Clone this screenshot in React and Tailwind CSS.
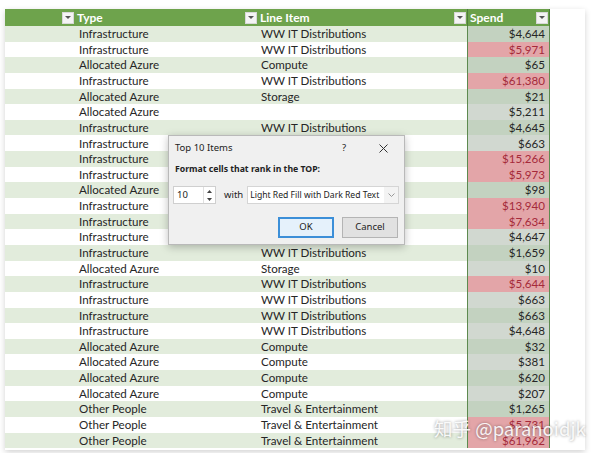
import React from "react";

const rows = [
  ["Infrastructure", "WW IT Distributions", "$4,644", false],
  ["Infrastructure", "WW IT Distributions", "$5,971", true],
  ["Allocated Azure", "Compute", "$65", false],
  ["Infrastructure", "WW IT Distributions", "$61,380", true],
  ["Allocated Azure", "Storage", "$21", false],
  ["Allocated Azure", "", "$5,211", false],
  ["Infrastructure", "WW IT Distributions", "$4,645", false],
  ["Infrastructure", "WW IT Distributions", "$663", false],
  ["Infrastructure", "WW IT Distributions", "$15,266", true],
  ["Infrastructure", "WW IT Distributions", "$5,973", true],
  ["Allocated Azure", "Compute", "$98", false],
  ["Infrastructure", "WW IT Distributions", "$13,940", true],
  ["Infrastructure", "WW IT Distributions", "$7,634", true],
  ["Infrastructure", "WW IT Distributions", "$4,647", false],
  ["Infrastructure", "WW IT Distributions", "$1,659", false],
  ["Allocated Azure", "Storage", "$10", false],
  ["Infrastructure", "WW IT Distributions", "$5,644", true],
  ["Infrastructure", "WW IT Distributions", "$663", false],
  ["Infrastructure", "WW IT Distributions", "$663", false],
  ["Infrastructure", "WW IT Distributions", "$4,648", false],
  ["Allocated Azure", "Compute", "$32", false],
  ["Allocated Azure", "Compute", "$381", false],
  ["Allocated Azure", "Compute", "$620", false],
  ["Allocated Azure", "Compute", "$207", false],
  ["Other People", "Travel & Entertainment", "$1,265", false],
  ["Other People", "Travel & Entertainment", "$5,731", true],
  ["Other People", "Travel & Entertainment", "$61,962", true],
];

function FilterBtn() {
  return (
    <span className="flex h-[12px] w-[12px] items-center justify-center bg-[#f4f4f4] border border-[#d8d8d8]">
      <svg width="6" height="4" viewBox="0 0 6 4">
        <path d="M0 0 L6 0 L3 3 Z" fill="#555" />
      </svg>
    </span>
  );
}

function Dialog() {
  return (
    <div
      className="absolute left-[168px] top-[135px] w-[237px] h-[110px] bg-[#f0f0f0] border border-[#b9b9b9] shadow-[0_2px_8px_rgba(0,0,0,0.25)] text-[#222]"
      style={{ fontFamily: "'Noto Sans', 'Open Sans', sans-serif" }}
    >
      <div className="flex items-center h-[24px] pl-[6px] pr-[16px] text-[9.5px]">
        <span>Top 10 Items</span>
        <span className="ml-auto mr-[33px]">?</span>
        <svg width="9" height="9" viewBox="0 0 9 9">
          <path d="M0.5 0.5 L8.5 8.5 M8.5 0.5 L0.5 8.5" stroke="#333" strokeWidth="1" />
        </svg>
      </div>
      <div className="pl-[6px] pt-[3px] text-[8.7px] font-bold">Format cells that rank in the TOP:</div>
      <div className="flex items-center pl-[4px] mt-[10px] h-[18px]">
        <div className="flex h-[18px] w-[43px] bg-white border border-[#cfcfcf]">
          <span className="flex-1 pl-[3px] text-[9.5px] leading-[16px]">10</span>
          <div className="flex flex-col w-[12px] border-l border-[#e0e0e0]">
            <span className="flex-1 flex items-center justify-center">
              <svg width="5" height="3" viewBox="0 0 5 3"><path d="M0 3 L5 3 L2.5 0 Z" fill="#444" /></svg>
            </span>
            <span className="flex-1 flex items-center justify-center">
              <svg width="5" height="3" viewBox="0 0 5 3"><path d="M0 0 L5 0 L2.5 3 Z" fill="#444" /></svg>
            </span>
          </div>
        </div>
        <span className="ml-[8px] text-[9.5px]">with</span>
        <div className="ml-[4px] flex items-center h-[18px] w-[152px] bg-white border border-[#d5d5d5] pl-[2px]">
          <span className="text-[8.6px] whitespace-nowrap">Light Red Fill with Dark Red Text</span>
          <span className="ml-auto flex h-full w-[14px] items-center justify-center bg-[#f3f3f3]">
            <svg width="7" height="4" viewBox="0 0 7 4"><path d="M0.5 0.5 L3.5 3.5 L6.5 0.5" stroke="#999" fill="none" /></svg>
          </span>
        </div>
      </div>
      <div className="flex justify-end gap-[8px] pr-[6px] mt-[13px]">
        <button className="h-[21px] w-[56px] bg-[#e5f1fb] border-2 border-[#3c8fd8] text-[9.5px]">OK</button>
        <button className="h-[21px] w-[56px] bg-[#e1e1e1] border border-[#b4b4b4] text-[9.5px]">Cancel</button>
      </div>
    </div>
  );
}

export default function App() {
  return (
    <div className="relative w-[600px] h-[453px] bg-white overflow-hidden">
      <div
        className="ml-[5px] mt-[9px] w-[580px] bg-white shadow-[0_2px_6px_rgba(0,0,0,0.18)] text-[#262626]"
        style={{ fontFamily: "Lato, 'Open Sans', sans-serif" }}
      >
        <div className="flex h-[17px] bg-[#6ea34c] text-white text-[12px] font-bold items-center">
          <div className="flex w-[70px] justify-end pr-[1px]">
            <FilterBtn />
          </div>
          <div className="flex w-[183px] items-center pl-[2px] pr-[1px]">
            <span>Type</span>
            <span className="ml-auto"><FilterBtn /></span>
          </div>
          <div className="flex w-[209px] items-center pl-[2px] pr-[1px]">
            <span>Line Item</span>
            <span className="ml-auto"><FilterBtn /></span>
          </div>
          <div className="flex w-[83px] h-full items-center pl-[2px] pr-[1px] bg-[#6aa04a] border-x border-[#4f7d3c]">
            <span>Spend</span>
            <span className="ml-auto"><FilterBtn /></span>
          </div>
          <div className="flex-1 h-full bg-white" />
        </div>
        {rows.map(([type, item, spend, red], i) => {
          const odd = i % 2 === 0;
          return (
            <div key={i} className="flex h-[15.65px] items-center text-[11.6px] leading-none">
              <div className={`flex h-full flex-1 max-w-[462px] items-center ${odd ? "bg-[#e2ecdc]" : "bg-white"}`}>
                <span className="w-[70px]" />
                <span className="w-[183px] pl-[4px]">{type}</span>
                <span className="w-[209px] pl-[3px]">{item}</span>
              </div>
              <div
                className={`flex h-full w-[83px] items-center justify-end pr-[4px] border-x border-[#5d8a4f] ${
                  red
                    ? "bg-[#e3a5a8] text-[#a52a3a]"
                    : odd
                    ? "bg-[#c3d2c0]"
                    : "bg-[#d1d8d0]"
                }`}
              >
                {spend}
              </div>
              <div className="flex-1 h-full bg-white" />
            </div>
          );
        })}
        <div className="h-[2px]" />
      </div>
      <Dialog />
      <div
        className="absolute left-[434px] top-[419px] text-[18.5px] leading-none text-white/90 whitespace-nowrap [text-shadow:0_0_3px_rgba(0,0,0,0.45)]"
        style={{ fontFamily: "'Noto Sans CJK SC', 'Noto Sans', sans-serif" }}
      >
        知乎 @paranoidjk
      </div>
    </div>
  );
}
